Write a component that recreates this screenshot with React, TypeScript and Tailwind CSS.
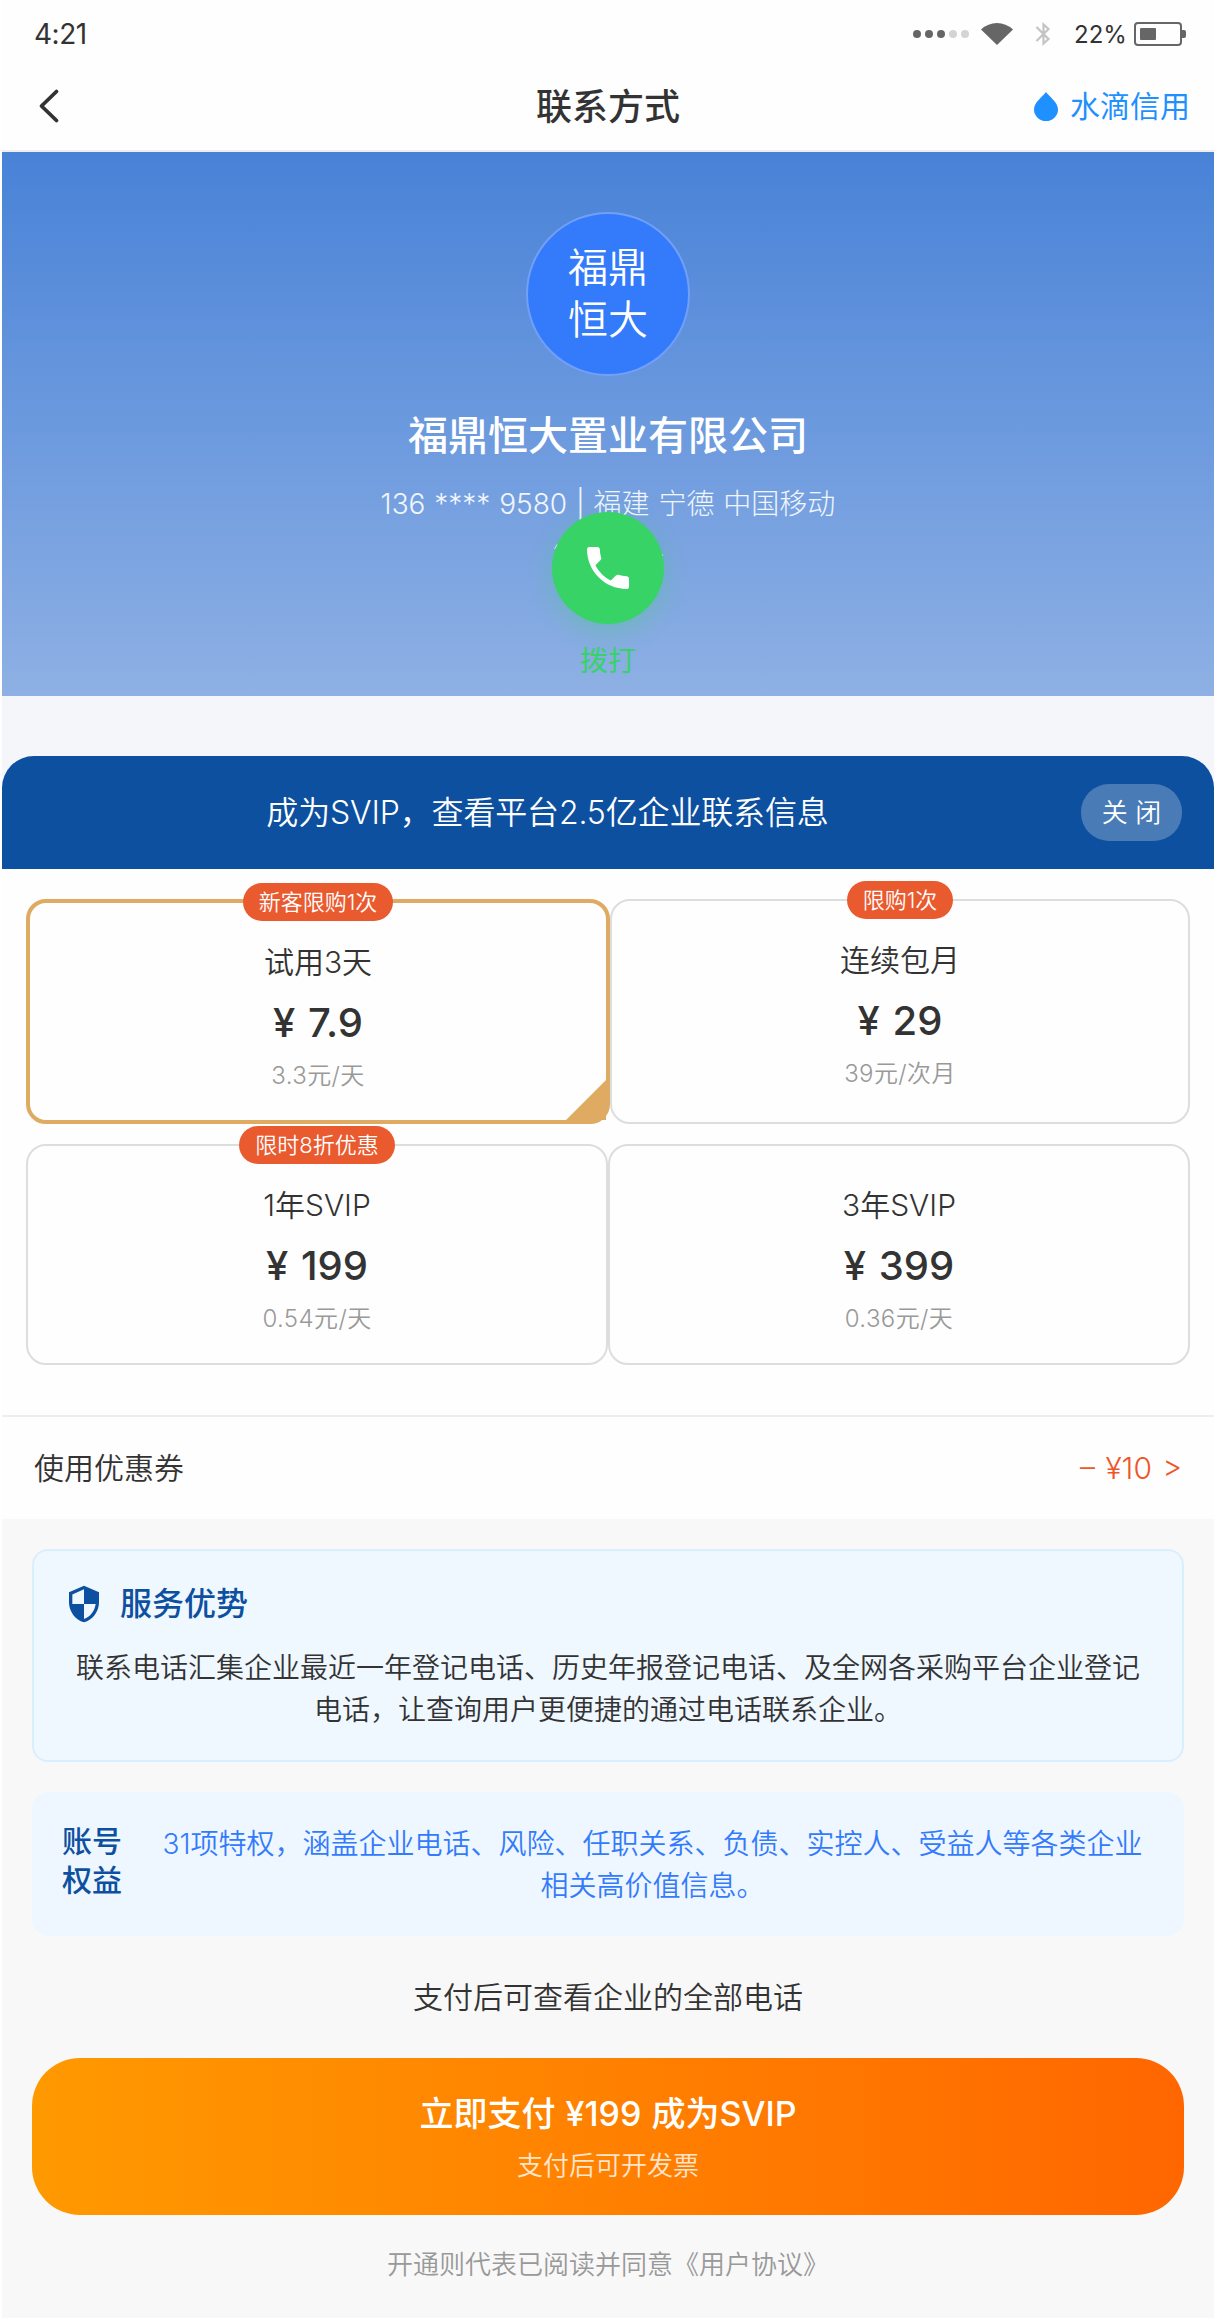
import React from "react";

type Plan = {
  title: string;
  price: string;
  unit: string;
  badge?: string;
  selected?: boolean;
  box: string;
};

const plans: Plan[] = [
  { title: "试用3天", price: "¥ 7.9", unit: "3.3元/天", badge: "新客限购1次", selected: true, box: "w-[584px] h-[225px]" },
  { title: "连续包月", price: "¥ 29", unit: "39元/次月", badge: "限购1次", box: "w-[580px] h-[225px]" },
  { title: "1年SVIP", price: "¥ 199", unit: "0.54元/天", badge: "限时8折优惠", box: "w-[582px] h-[221px]" },
  { title: "3年SVIP", price: "¥ 399", unit: "0.36元/天", box: "w-[582px] h-[221px]" },
];

function StatusBar() {
  return (
    <div className="flex h-[68px] items-center justify-between pl-[32px] pr-[28px] font-normal">
      <span className="text-[28px] leading-none tracking-[-0.5px]">4:21</span>
      <div className="flex items-center">
        <div className="flex gap-1">
          <i className="size-2 rounded-full bg-[#666]" />
          <i className="size-2 rounded-full bg-[#666]" />
          <i className="size-2 rounded-full bg-[#666]" />
          <i className="size-2 rounded-full bg-[#d4d4d4]" />
          <i className="size-2 rounded-full bg-[#d4d4d4]" />
        </div>
        <svg className="ml-3 h-[22px] w-8" viewBox="0 0 32 22" fill="#666">
          <path d="M16 22 0 6.500Q7 0 16 0t16 6.500z" />
        </svg>
        <svg className="ml-[22px] h-6 w-4" viewBox="0 0 16 24" fill="none" stroke="#c4c4c4" strokeWidth="2.2">
          <path d="M1.500 5 13.500 17 8.500 21.500V2.500l5 4.500L1.500 19" />
        </svg>
        <span className="ml-[23px] w-[60px] pt-px text-[24px] leading-none">22%</span>
        <div className="flex h-6 w-12 items-center rounded-[4px] border-2 border-[#666] pl-1">
          <div className="h-3 w-4 rounded-[1px] bg-[#666]" />
        </div>
        <div className="h-2 w-1 rounded-r-[2px] bg-[#666]" />
      </div>
    </div>
  );
}

function NavBar() {
  return (
    <div className="grid h-[84px] grid-cols-3 items-center border-b-2 border-[#eee] pb-[6px]">
      <svg className="ml-[36px] h-9 w-6" viewBox="0 0 24 36" fill="none" stroke="#333" strokeWidth="3.8" strokeLinecap="round" strokeLinejoin="round">
        <path d="M18.500 3.500 3.500 18l15 14.500" />
      </svg>
      <div className="pt-[2px] text-center text-[36px] font-medium leading-none">联系方式</div>
      <div className="flex items-center justify-end pr-[24px] text-[30px] font-normal leading-none text-[#1e90ff]">
        <svg className="mr-3 h-[29px] w-6" viewBox="0 0 24 29" fill="currentColor">
          <path d="M12 0c3 4.500 12 10 12 17.500a12 11.500 0 0 1-24 0C0 10 9 4.500 12 0z" />
        </svg>
        水滴信用
      </div>
    </div>
  );
}

function Company() {
  return (
    <div className="flex h-[544px] flex-col items-center bg-linear-to-b from-[#4882d7] to-[#8eb0e4] pt-[60px] text-white">
      <div className="flex size-[164px] items-center justify-center rounded-full border-2 border-[#719ffa] bg-[#347bfb] text-center text-[40px] leading-[52px]">
        福鼎
        <br />
        恒大
      </div>
      <div className="mt-[36px] text-[40px] font-medium leading-[48px]">福鼎恒大置业有限公司</div>
      <div className="mt-[24px] h-[40px] whitespace-pre text-[28px] font-light leading-[40px] text-white/90 [word-spacing:1px]">
        136 **** 9580 | 福建 宁德 中国移动
      </div>
      <div className="relative -mt-[12px] flex size-[112px] items-center justify-center rounded-full bg-[#37d367] shadow-[0_8px_24px_rgba(55,211,103,0.3)]">
        <svg className="absolute left-0 top-0 size-[112px]" viewBox="0 0 112 112" fill="none" stroke="#d3e1f5" strokeWidth="1">
          <path d="M2.500 37 5 32.500M110.500 42.500v1" />
        </svg>
        <svg className="size-14" viewBox="0 0 24 24" fill="#fff">
          <path d="M6.620 10.790c1.440 2.830 3.760 5.140 6.590 6.590l2.200-2.200c.27-.27.67-.36 1.020-.24 1.120.370 2.330.570 3.570.570.55 0 1 .45 1 1V20c0 .55-.45 1-1 1-9.390 0-17-7.610-17-17 0-.55.45-1 1-1h3.500c.55 0 1 .45 1 1 0 1.250.2 2.450.570 3.570.110.350.030.740-.25 1.020z" />
        </svg>
      </div>
      <div className="mt-[21px] text-[28px] font-normal leading-[32px] text-[#37d367]">拨打</div>
    </div>
  );
}

function PlanCard({ plan }: { plan: Plan }) {
  return (
    <div
      className={`relative flex flex-col items-center rounded-[20px] leading-none ${plan.box} ${
        plan.selected ? "border-4 border-[#dfaa62] pt-[44px]" : "border-2 border-[#ddd] pt-[44px]"
      }`}
    >
      {plan.badge && (
        <div className="absolute -top-[20px] flex h-[38px] items-center rounded-[19px] bg-[#ea5a2f] px-4 text-[22px] leading-none text-white">
          {plan.badge}
        </div>
      )}
      <div className="text-[30px] leading-[30px]">{plan.title}</div>
      <div className="mt-[26px] text-[40px] font-medium leading-[40px] [word-spacing:2px]">{plan.price}</div>
      <div className="mt-[21px] text-[24px] leading-[24px] tracking-[0.4px] text-[#999]">{plan.unit}</div>
      {plan.selected && (
        <div className="absolute bottom-0 right-0 size-10 bg-[#dfaa62] [clip-path:polygon(100%_0,100%_100%,0_100%)]" />
      )}
    </div>
  );
}

export default function App() {
  return (
    <div
      lang="zh-CN"
      className="h-[2318px] w-[1214px] overflow-hidden bg-white pl-[2px] font-[Inter,'Noto_Sans_CJK_SC',sans-serif] font-[350] text-[#333]"
    >
      <div className="flex h-full flex-col bg-[#f8f8f8]">
        <div className="bg-[#fefefe]">
          <StatusBar />
          <NavBar />
        </div>
        <Company />
        <div className="bg-[#f5f6fa] pt-[60px]">
          <div className="flex h-[113px] items-center rounded-t-[32px] bg-[#0d509f] pr-[32px] text-white">
            <div className="flex-1 pl-[12px] pt-px text-center text-[32px] leading-none tracking-[-0.15px]">
              成为SVIP，查看平台2.5亿企业联系信息
            </div>
            <div className="flex h-[57px] w-[101px] items-center justify-center rounded-[28px] bg-white/25 text-[26px] leading-none">
              关 闭
            </div>
          </div>
        </div>
        <div className="h-[546px] bg-[#fefefe] px-6 pt-[30px]">
          <div className="flex flex-wrap gap-y-[20px]">
            {plans.map((p) => (
              <PlanCard key={p.title} plan={p} />
            ))}
          </div>
        </div>
        <div className="flex h-[104px] items-center justify-between border-t-2 border-[#eee] bg-[#fefefe] px-[32px] text-[30px] leading-none">
          <span>使用优惠券</span>
          <span className="text-[#ee562a] [word-spacing:2px]">– ¥10 &gt;</span>
        </div>
        <div className="px-[30px] pt-[30px] text-center">
          <div className="h-[213px] rounded-[16px] border-2 border-[#d9effd] bg-[#eff7ff] px-[30px] pt-[33px]">
            <div className="flex h-10 items-center text-[32px] font-medium leading-none text-[#0d509f]">
              <svg className="mr-4 size-10" viewBox="0 0 24 24" fill="currentColor">
                <path d="M12 1 3 5v6c0 5.550 3.840 10.740 9 12 5.160-1.260 9-6.450 9-12V5zm0 10.990h7c-.53 4.120-3.280 7.790-7 8.940V12H5V6.300l7-3.110z" />
              </svg>
              服务优势
            </div>
            <p className="mt-[23px] text-[28px] leading-[42px]">
              联系电话汇集企业最近一年登记电话、历史年报登记电话、及全网各采购平台企业登记
              <br />
              电话，让查询用户更便捷的通过电话联系企业。
            </p>
          </div>
          <div className="mt-[30px] flex h-[144px] items-center rounded-[16px] bg-[#eef7ff] px-[30px]">
            <div className="w-[60px] pb-[7px] text-[30px] font-medium leading-[39px] text-[#0d509f]">账号权益</div>
            <p className="flex-1 pl-[29px] pt-px text-[28px] leading-[42px] text-[#347bfb]">
              31项特权，涵盖企业电话、风险、任职关系、负债、实控人、受益人等各类企业
              <br />
              相关高价值信息。
            </p>
          </div>
          <div className="mt-[41px] text-[30px] leading-[40px]">支付后可查看企业的全部电话</div>
          <div className="mt-[41px] flex h-[157px] flex-col items-center rounded-[48px] bg-linear-to-r from-[#ff9900] to-[#ff6600] pt-[36px] text-white">
            <div className="text-[34px] font-medium leading-[40px] [word-spacing:1px]">立即支付 ¥199 成为SVIP</div>
            <div className="mt-[14px] text-[26px] leading-[36px] text-white/80">支付后可开发票</div>
          </div>
          <div className="mt-[32px] text-[26px] leading-[36px] text-[#999]">开通则代表已阅读并同意《用户协议》</div>
        </div>
      </div>
    </div>
  );
}
